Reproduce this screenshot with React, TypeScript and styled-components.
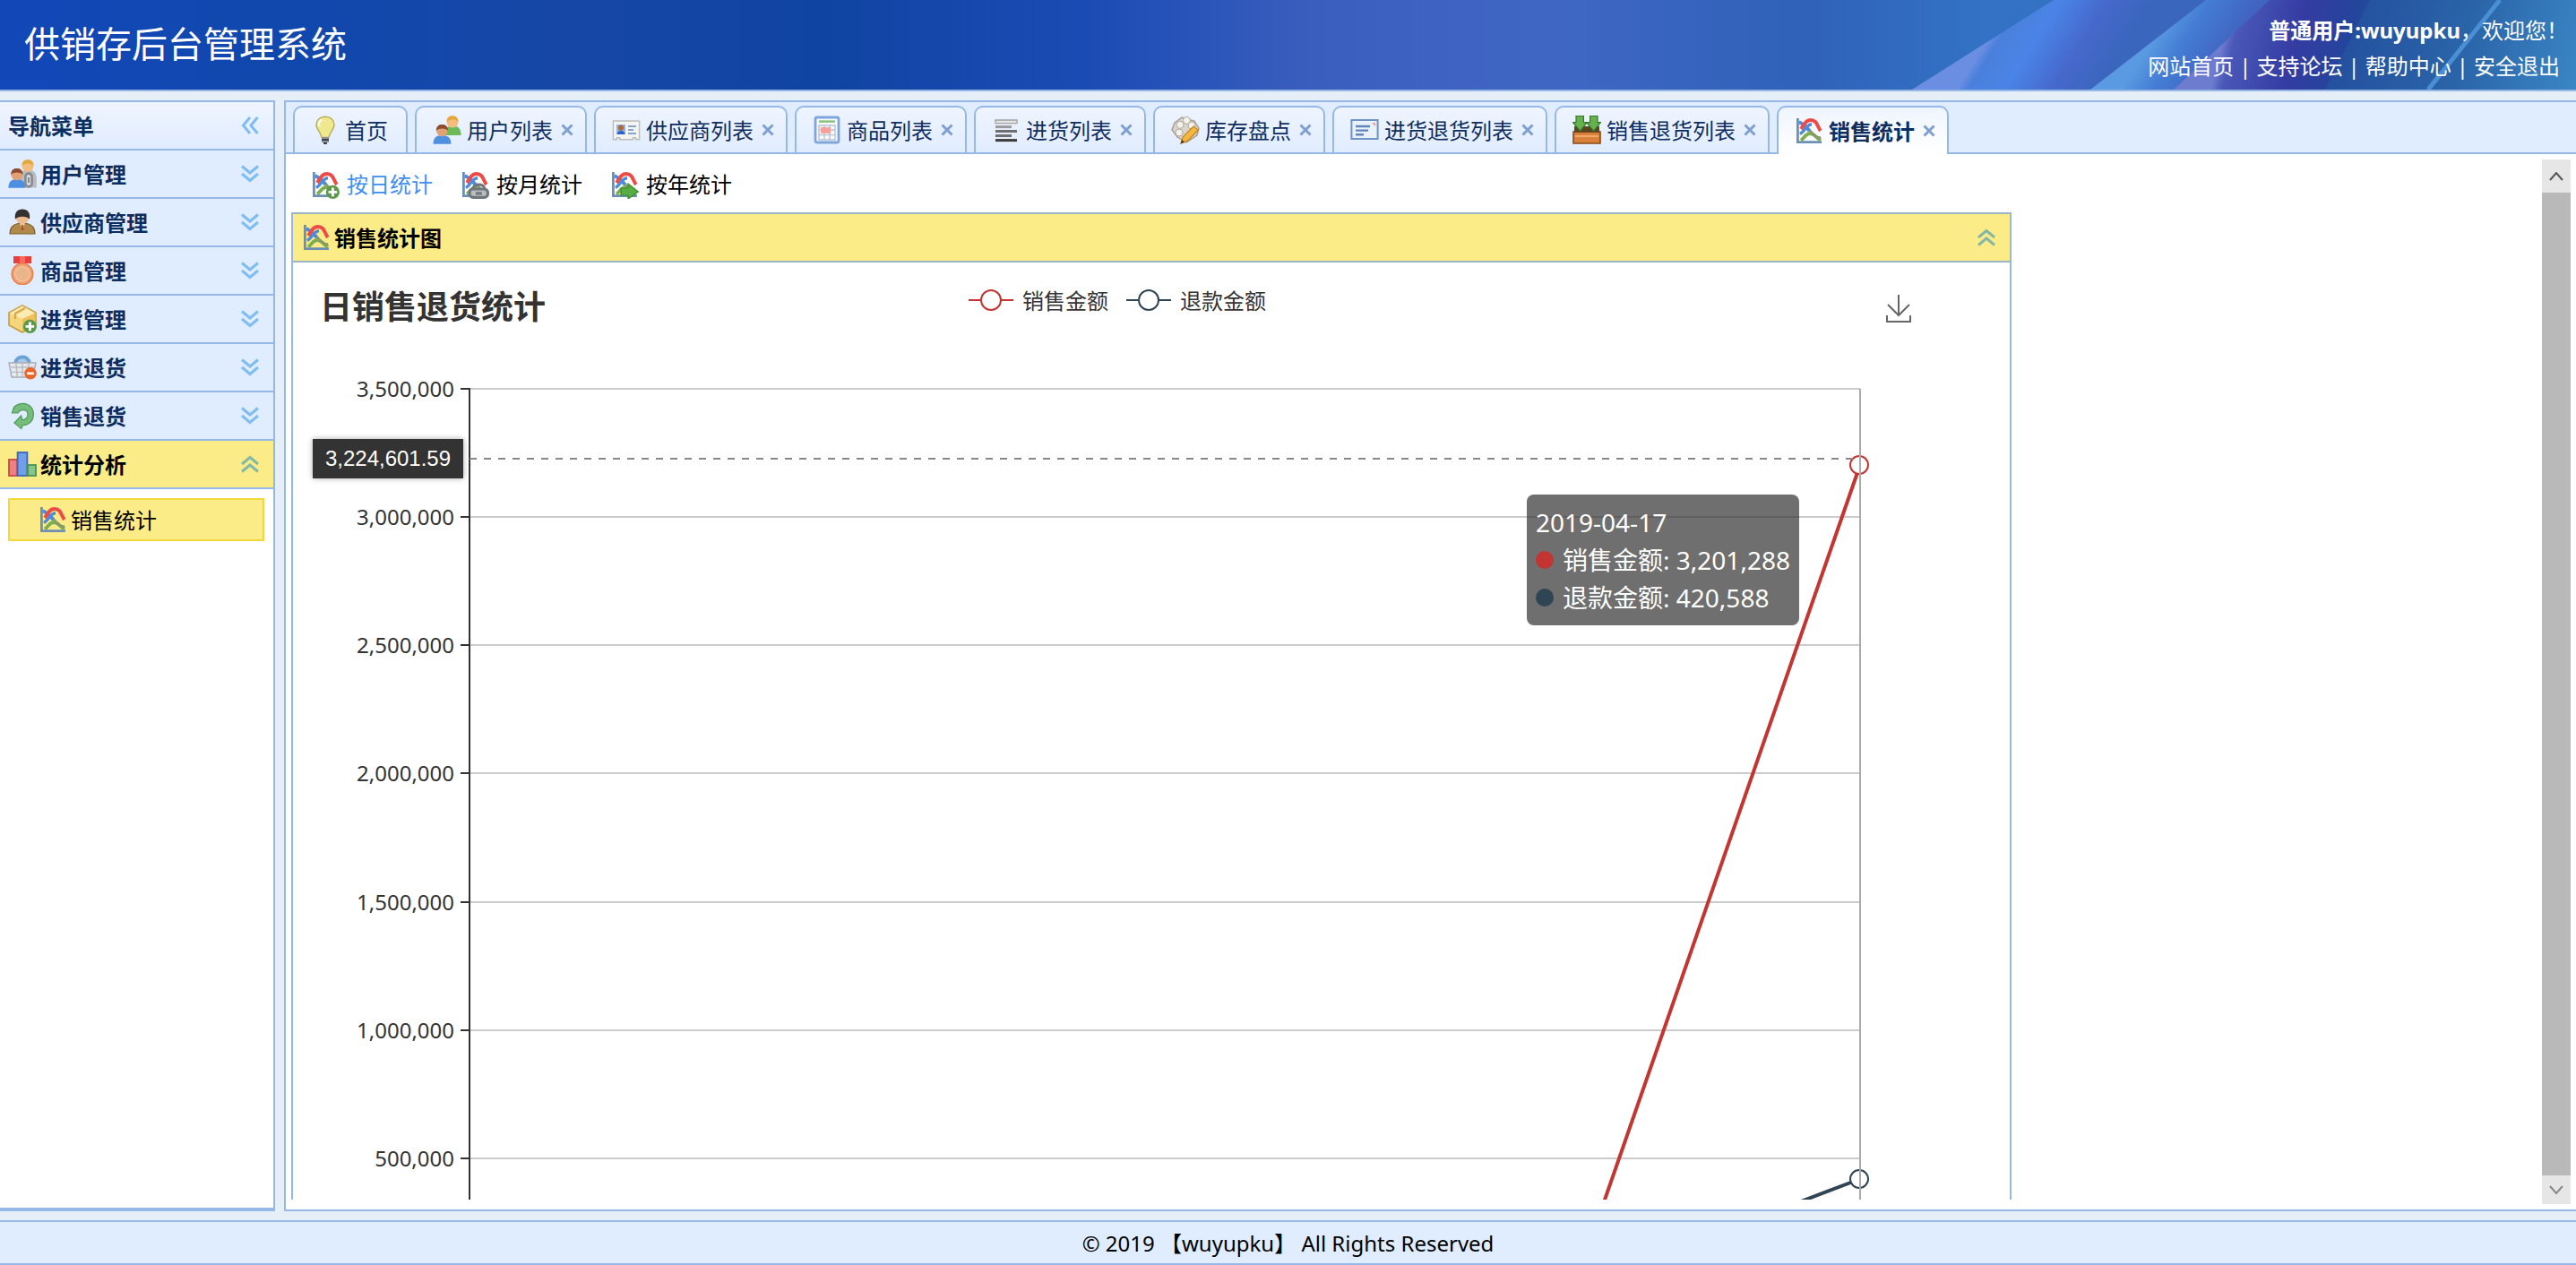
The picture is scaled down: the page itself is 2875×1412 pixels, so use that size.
import React from 'react';
import styled, { createGlobalStyle, css } from 'styled-components';

const line = '#95b8e7';
const sans = '"Noto Sans", "Noto Sans CJK SC", sans-serif';

const GlobalStyle = createGlobalStyle`
  * { box-sizing: border-box; }
  body { margin: 0; background: #e6eef8; }
  button { margin: 0; padding: 0; border: 0; background: none; font: inherit; color: inherit; cursor: pointer; }
  a { color: inherit; text-decoration: none; }
  svg { display: block; flex: none; }
`;

const Page = styled.div`
  display: flex;
  flex-direction: column;
  gap: 10px;
  height: 100vh;
  font-family: ${sans};
  font-size: 24px;
  line-height: 32px;
  color: #000;
  overflow: hidden;
`;

const Header = styled.header`
  position: relative;
  display: flex;
  justify-content: space-between;
  flex: none;
  height: 102px;
  border-bottom: 2px solid ${line};
  background: linear-gradient(90deg, #1247b8 0%, #1048ae 10%, #1647a6 22%, #1044a2 32%, #1a4bb4 42%, #3a5ebe 51%, #4066c4 60%, #2f62b8 70%, #3372c4 77%, #3a6cc0 100%);
  color: #fff;
`;

const Beams = styled.svg`
  position: absolute;
  right: 0;
  top: 0;
`;

const Brand = styled.h1`
  position: relative;
  margin: 0;
  padding: 19px 0 0 27px;
  font-size: 40px;
  line-height: 60px;
  font-weight: 400;
`;

const UserArea = styled.div`
  position: relative;
  padding: 14px 9px 0 0;
  line-height: 40px;
  text-align: right;
`;

const HeaderLinks = styled.nav`
  display: flex;
  justify-content: flex-end;
  gap: 6px;
  padding-right: 9px;
`;

const Body = styled.div`
  display: flex;
  gap: 10px;
  flex: 1;
  min-height: 0;
`;

const Sidebar = styled.aside`
  flex: none;
  width: 307px;
  border: solid ${line};
  border-width: 2px 2px 4px 0;
  background: #fff;
`;

const bar = css`
  display: flex;
  align-items: center;
  gap: 4px;
  width: 100%;
  height: 54px;
  padding: 0 16px 0 9px;
  border-bottom: 2px solid ${line};
  font-size: 24px;
  line-height: 32px;
  font-weight: 700;
  text-align: left;
`;

const Label = styled.span`
  padding-top: 2px;
`;

const Grow = styled.span`
  flex: 1;
`;

const SideHead = styled.div`
  ${bar}
  background: linear-gradient(#eff5ff, #e0ecff);
  color: #0e2d5f;
`;

const SideRow = styled.button<{ $open?: boolean }>`
  && {
    ${bar}
    background: ${(p) => (p.$open ? '#fbec88' : '#e0ecff')};
    color: ${(p) => (p.$open ? '#000' : '#0e2d5f')};
  }
`;

const SideItem = styled.a`
  display: flex;
  align-items: center;
  gap: 4px;
  height: 48px;
  margin: 10px 10px 0 9px;
  padding-left: 32px;
  border: 2px solid #f2d93a;
  background: #fbec88;
`;

const Main = styled.main`
  display: flex;
  flex-direction: column;
  flex: 1;
  min-width: 0;
  border: solid ${line};
  border-width: 2px 0 2px 2px;
  background: #fff;
`;

const Tabs = styled.div`
  display: flex;
  gap: 8px;
  flex: none;
  height: 58px;
  padding: 4px 8px 0;
  border-bottom: 2px solid ${line};
  background: #e0ecff;
  color: #0e2d5f;
`;

const Tab = styled.div<{ $active?: boolean }>`
  display: flex;
  flex: none;
  height: ${(p) => (p.$active ? 54 : 52)}px;
  border: 2px solid ${line};
  border-bottom: 0;
  border-radius: 10px 10px 0 0;
  background: ${(p) => (p.$active ? 'linear-gradient(#eff5ff, #fff)' : 'linear-gradient(#eff5ff, #e0ecff)')};
  font-weight: ${(p) => (p.$active ? 700 : 400)};
`;

const TabTitle = styled.button<{ $last?: boolean }>`
  && {
    display: flex;
    align-items: center;
    gap: 6px;
    padding: 0 ${(p) => (p.$last ? 20 : 0)}px 0 18px;
  }
`;

const TabClose = styled.button`
  && {
    display: flex;
    align-items: center;
    justify-content: center;
    width: 32px;
    margin-right: 4px;
  }
`;

const Pane = styled.div`
  display: flex;
  flex: 1;
  min-height: 0;
  padding: 6px;
`;

const Content = styled.div`
  flex: 1;
  min-width: 0;
  margin: -6px 0 5px;
  overflow: hidden;
`;

const Tools = styled.div`
  display: flex;
  gap: 31px;
  padding: 18px 22px 15px;
`;

const Tool = styled.button<{ $on?: boolean }>`
  && {
    display: flex;
    align-items: center;
    gap: 8px;
    color: ${(p) => (p.$on ? '#3f8ff0' : '#000')};
  }
`;

const Panel = styled.section`
  width: 1920px;
  border: 2px solid ${line};
  border-top-color: #9bb5c4;
`;

const PanelHead = styled.h2`
  ${bar}
  margin: 0;
  padding-left: 10px;
  border-bottom-color: #9bb5c4;
  background: #fbec88;
`;

const Chart = styled.div`
  position: relative;
  width: 1840px;
  color: #333;
`;

const ChartHead = styled.div`
  display: grid;
  grid-template-columns: 1fr auto 1fr;
  align-items: start;
  height: 100px;
  padding: 25px 30px 0;
`;

const ChartTitle = styled.h3`
  margin: 0;
  font-size: 36px;
  line-height: 50px;
  font-weight: 700;
`;

const Legend = styled.div`
  display: flex;
  gap: 20px;
`;

const LegendItem = styled.button`
  && {
    display: flex;
    align-items: center;
    gap: 10px;
    height: 34px;
  }
`;

const Save = styled.button`
  && {
    justify-self: end;
    padding-top: 8px;
  }
`;

const Plot = styled.svg`
  font-family: ${sans};
  font-size: 24px;
  overflow: visible;
`;

const Tip = styled.div`
  position: absolute;
  left: 1377px;
  top: 259px;
  padding: 10px;
  border-radius: 8px;
  background: rgba(50, 50, 50, 0.7);
  color: #fff;
  font-size: 28px;
  line-height: 42px;
  white-space: nowrap;
`;

const TipRow = styled.div`
  display: flex;
  align-items: center;
  gap: 10px;
`;

const Dot = styled.span<{ $color: string }>`
  width: 20px;
  height: 20px;
  border-radius: 50%;
  background: ${(p) => p.$color};
`;

const Scrollbar = styled.div`
  display: flex;
  flex-direction: column;
  flex: none;
  width: 32px;
  background: #b9b9b9;
`;

const ScrollButton = styled.button<{ $size: number }>`
  && {
    display: flex;
    align-items: center;
    justify-content: center;
    height: ${(p) => p.$size}px;
    background: #e6e6e6;
  }
`;

const Footer = styled.footer`
  display: flex;
  align-items: center;
  justify-content: center;
  flex: none;
  height: 50px;
  border: solid ${line};
  border-width: 2px 0;
  background: #e0ecff;
`;

type Badge = 'plus' | 'link' | 'arrow';

const badges: Record<Badge, React.ReactNode> = {
  plus: (
    <g>
      <circle cx="12.2" cy="12.2" r="3.8" fill="#5a9a48" />
      <path d="M12.2 9.800v4.800M9.800 12.200h4.800" stroke="#fff" strokeWidth="1.400" />
    </g>
  ),
  link: (
    <g fill="none" stroke="#6f767c" strokeWidth="1.600">
      <rect x="5" y="10.500" width="10.200" height="4.700" rx="2" fill="#b8bdc2" />
      <path d="M7 10.500c0-3.200 6.400-3.200 6.400 0M8.500 12.900h3.400" />
    </g>
  ),
  arrow: <path d="M6 10h4V7.500l5.700 4.500L10 16v-2H6z" fill="#58ad42" stroke="#3a8a2c" strokeWidth=".6" />,
};

const art: Record<string, React.ReactNode> = {
  chart: (
    <g fill="none">
      <path d="M1.700 1v13.300H15" stroke="#6c8fb5" strokeWidth="1.400" />
      <path d="M3.500 13.300C5.500 12 6 9.500 8.500 9.500s3.500 2.500 6 3.800" stroke="#7fae52" strokeWidth="1.900" />
      <path d="M2.600 3.500C5 4 7.500 6.500 9 8.400s3 3.600 5.600 3.400" stroke="#8a9a68" strokeWidth="1.400" />
      <path d="M2.400 3.200c2 .6 4.300 3 5.800 4.800" stroke="#4d8bdc" strokeWidth="1.900" />
      <path d="M3 9.800C6.500 7.500 6 4.800 9.500 4.300" stroke="#4d8bdc" strokeWidth="1.700" />
      <path d="M3.500 7C5.200 5 5.800 2 9 2c3.400 0 3.600 3.400 5.400 6" stroke="#ee4b48" strokeWidth="2" />
    </g>
  ),
  bulb: (
    <g>
      <path d="M8 .6c-3 0-5 2-5 4.600 0 2.300 2.600 4.200 3 7h4c.4-2.800 3-4.700 3-7C13 2.600 11 .6 8 .6z" fill="#efe88e" stroke="#b9ad5c" strokeWidth=".7" />
      <path d="M6 2.300C4.800 3 4.300 4.500 4.800 6" stroke="#fff" fill="none" />
      <path d="M6 12h4v3H6z" fill="#8c9199" />
      <path d="M6 13.500h4M7 15.500h2" stroke="#3f444b" strokeWidth=".9" />
    </g>
  ),
  users: (
    <g>
      <path d="M6.500 11c0-4 1.800-5.200 4.600-5.200S15.800 7 15.800 11z" fill="#6cb95a" />
      <circle cx="11" cy="3.600" r="3.200" fill="#f3bd7c" />
      <path d="M7.700 3.500C7.700 1 9.300.1 11 .1s3.300.9 3.300 3.400c-1.600-1.700-5-1.700-6.600 0z" fill="#e6a73a" />
      <path d="M.3 15.900C.3 12.300 2 11 5.200 11s5 1.300 5 4.900z" fill="#4f8fe0" />
      <circle cx="5.200" cy="8.400" r="3.200" fill="#e3a072" />
      <path d="M1.900 8.500C1.900 5.900 3.500 5 5.200 5s3.400.9 3.400 3.500C6.800 6.900 3.700 6.900 1.900 8.500z" fill="#8c4a2f" />
    </g>
  ),
  usersCog: (
    <g>
      <path d="M6.500 11c0-4 1.800-5.200 4.600-5.200S15.900 7 15.900 11v4.800H9z" fill="#b9bcc0" />
      <circle cx="11" cy="3.600" r="3.200" fill="#f3bd7c" />
      <path d="M7.700 3.500C7.700 1 9.300.1 11 .1s3.300.9 3.300 3.400c-1.600-1.700-5-1.700-6.600 0z" fill="#e6a73a" />
      <path d="M.2 15.900C.2 12.300 2 11 4.900 11s4.800 1.300 4.800 4.900z" fill="#4f8fe0" />
      <circle cx="4.900" cy="8.400" r="3.200" fill="#e3a072" />
      <path d="M1.600 8.500C1.600 5.900 3.200 5 4.900 5s3.400.9 3.400 3.500C6.500 6.900 3.400 6.900 1.600 8.500z" fill="#8c4a2f" />
      <rect x="9.700" y="7.800" width="3.600" height="7.400" rx="1.800" fill="#d9dbdd" stroke="#858a90" strokeWidth="1.300" />
      <path d="M11.500 10v3" stroke="#858a90" />
    </g>
  ),
  card: (
    <g>
      <path d="M.7 3h14.600v10.400h-2v-1h-1.600v1H4.300v-1H2.700v1h-2z" fill="#f4f4f2" stroke="#bdbdb8" strokeWidth=".7" />
      <rect x="2.500" y="5" width="5" height="5.500" fill="#8db6ea" />
      <circle cx="5" cy="6.800" r="1.600" fill="#b06a3c" />
      <path d="M2.800 10.500c0-2.700 4.400-2.700 4.400 0z" fill="#2d62c8" />
      <path d="M9 6h4.500M9 8h3M9 10h4.500" stroke="#85a6cf" strokeWidth="1" />
    </g>
  ),
  sheet: (
    <g>
      <rect x="1.500" y="1" width="13" height="14" rx="1" fill="#f7f9fd" stroke="#7fa6dc" strokeWidth="1.400" />
      <path d="M3.500 3.300h9" stroke="#86c07a" strokeWidth="1.200" />
      <path d="M3.500 5.500h9v8h-9zM3.500 8h9M3.500 10.800h9M6.500 5.500v8M9.500 5.500v8" fill="none" stroke="#b9c3d6" strokeWidth=".7" />
      <path d="M4.500 6.500h5.500V10H4.500z" fill="#f59a94" opacity=".9" />
    </g>
  ),
  lines: (
    <g>
      <path d="M2 2.500h12v1.800H2z" fill="#e4e4e4" stroke="#a3a3a3" strokeWidth=".7" />
      <path d="M2 6.300h9" stroke="#9a9a9a" strokeWidth="1.500" />
      <path d="M2 8.800h12M2 11.200h9" stroke="#6f6f6f" strokeWidth="1.500" />
      <path d="M2 13.800h12" stroke="#3b3b3b" strokeWidth="1.500" />
    </g>
  ),
  brick: (
    <g>
      <path d="M2 4l4-3 3 1 4 1 2.500 4-1 4-6 4-5-3L.5 8z" fill="#d9d5cc" stroke="#a39d90" strokeWidth=".7" />
      <circle cx="5" cy="5.200" r="2" fill="#f4f2ec" stroke="#b0aa9e" strokeWidth=".5" />
      <circle cx="8.700" cy="2.700" r="2" fill="#f4f2ec" stroke="#b0aa9e" strokeWidth=".5" />
      <circle cx="11.500" cy="5.500" r="2" fill="#f4f2ec" stroke="#b0aa9e" strokeWidth=".5" />
      <circle cx="4.500" cy="9.500" r="2" fill="#f4f2ec" stroke="#b0aa9e" strokeWidth=".5" />
      <path d="M5.500 15.500l1-3.500 6-6 2.700 2-6 6.200z" fill="#f3b73f" stroke="#c78421" strokeWidth=".6" />
      <path d="M5.300 15.700l.7-2.200 1.600 1.200z" fill="#4c3b2a" />
    </g>
  ),
  form: (
    <g>
      <rect x=".7" y="2.500" width="14.600" height="10.500" fill="#e9f1fc" stroke="#6e93c4" strokeWidth="1" />
      <path d="M3 6h8M3 8.300h7M3 10.600h4.500" stroke="#5f86bd" strokeWidth="1.200" />
      <path d="M12 4h2v2z" fill="#f09b9b" />
    </g>
  ),
  crate: (
    <g>
      <path d="M.5 9h15v6.500H.5z" fill="#d9803a" stroke="#8a4718" strokeWidth=".8" />
      <path d="M1.500 11.500h13" stroke="#f0ab6b" />
      <path d="M1 6h14v3.400H1z" fill="#5b4420" />
      <path d="M2 .2h4.200v3.600h1.900L4.300 8.600.2 3.800H2zM9.800.2H14v3.600h1.800l-4 4.800-4-4.800h2z" fill="#66b24e" stroke="#35782a" strokeWidth=".6" />
    </g>
  ),
  person: (
    <g>
      <path d="M1 14.500C1 10.500 3.500 8.500 8 8.500s7 2 7 6z" fill="#b08a4a" stroke="#7c5d2a" strokeWidth=".6" />
      <path d="M6.500 8.500h3L8 13z" fill="#e8c99a" />
      <path d="M7.500 9.500h1l.4 2.500-.9 1-.9-1z" fill="#b5552c" />
      <circle cx="8" cy="5.500" r="3.500" fill="#edb98e" />
      <path d="M4 6.400C3.400 2.500 5.300.8 8 .8s4.600 1.700 4 5.600C10.700 4.400 5.300 4.400 4 6.400z" fill="#33302e" />
    </g>
  ),
  medal: (
    <g>
      <path d="M3 0h10v4H3z" fill="#e9403c" />
      <path d="M6.500 0h3v4h-3z" fill="#fb6a60" />
      <circle cx="8" cy="9.900" r="5.900" fill="#f2a172" stroke="#e8834f" strokeWidth=".8" />
      <circle cx="8" cy="9.900" r="4.100" fill="#e9b58b" stroke="#f6c4a0" strokeWidth=".7" />
    </g>
  ),
  box: (
    <g>
      <path d="M8 .5l7.500 4v7L8 15.500.5 11.500v-7z" fill="#f5d67c" stroke="#c99b3a" strokeWidth=".8" />
      <path d="M.8 4.700L8 8l7.200-3.300L8 .8z" fill="#fcecb4" />
      <path d="M8 8v7.200L15.200 11.400V4.700z" fill="#eec05a" />
      <path d="M9.500 2L4 5v3" fill="none" stroke="#d9a84a" strokeWidth="1.200" />
    </g>
  ),
  basket: (
    <g>
      <path d="M4 6C4.500 1 11.500 1 12 6" fill="#a9c9e6" stroke="#6ba3d6" strokeWidth="2" />
      <path d="M.5 5.500h15L14 13.500H2z" fill="#e6e8eb" stroke="#a7adb5" strokeWidth=".7" />
      <path d="M1.500 8h13M2 10.700h12M4.500 5.800l.6 7.500M8 5.800v7.500M11.500 5.800l-.6 7.500" stroke="#b6bcc4" strokeWidth=".7" />
      <circle cx="12.500" cy="11.400" r="3.400" fill="#e8682a" />
      <path d="M10.600 11.400h3.800" stroke="#fff" strokeWidth="1.300" />
    </g>
  ),
  back: (
    <path d="M2.200 6.500C2.800 3 5.200 1.200 8.200 1.200c3.500 0 6 2.500 6 6 0 3.500-2.300 6-6 6.100l-.8 2L3.500 12l3.800-4 .5 2.300c2 .1 3.200-1.200 3.200-3 0-1.500-1-2.500-2.700-2.500-1.500 0-2.300.7-2.700 1.700z" fill="#76bd7c" stroke="#4f9a59" strokeWidth=".6" />
  ),
  bars: (
    <g strokeWidth=".9">
      <rect x=".5" y="5.500" width="4.600" height="9" fill="#f08080" stroke="#c8474b" />
      <rect x="5.300" y="1.500" width="5.400" height="13" fill="#6f9fe8" stroke="#3c66b8" />
      <rect x="11" y="8.500" width="4.500" height="6" fill="#86c48a" stroke="#4c9152" />
    </g>
  ),
};

const Icon = ({ name, badge }: { name: string; badge?: Badge }) => (
  <svg width="32" height="32" viewBox="0 0 16 16" aria-hidden="true">
    {art[name]}
    {badge && badges[badge]}
  </svg>
);

const Chevrons = ({ turn = 0 }: { turn?: number }) => (
  <svg width="20" height="20" viewBox="0 0 20 20" fill="none" stroke={turn === 180 ? '#84b8a6' : '#7fbdf0'} strokeWidth="3" aria-hidden="true">
    <path transform={`rotate(${turn} 10 10)`} d="M1 1.500l9 7.500 9-7.500M1 10l9 7.500L19 10" />
  </svg>
);

const Mark = ({ color }: { color: string }) => (
  <svg width="50" height="28" viewBox="0 0 50 28" fill="#fff" stroke={color} aria-hidden="true">
    <path d="M0 14h50" strokeWidth="2" />
    <circle cx="25" cy="14" r="11" strokeWidth="2" />
  </svg>
);

const sections = [
  { label: '用户管理', icon: 'usersCog' },
  { label: '供应商管理', icon: 'person' },
  { label: '商品管理', icon: 'medal' },
  { label: '进货管理', icon: 'box', badge: 'plus' as Badge },
  { label: '进货退货', icon: 'basket' },
  { label: '销售退货', icon: 'back' },
  { label: '统计分析', icon: 'bars', open: true },
];

const tabs = [
  { label: '首页', icon: 'bulb', fixed: true },
  { label: '用户列表', icon: 'users' },
  { label: '供应商列表', icon: 'card' },
  { label: '商品列表', icon: 'sheet' },
  { label: '进货列表', icon: 'lines' },
  { label: '库存盘点', icon: 'brick' },
  { label: '进货退货列表', icon: 'form' },
  { label: '销售退货列表', icon: 'crate' },
  { label: '销售统计', icon: 'chart', active: true },
];

const tools: { label: string; badge: Badge }[] = [
  { label: '按日统计', badge: 'plus' },
  { label: '按月统计', badge: 'link' },
  { label: '按年统计', badge: 'arrow' },
];

const links = ['网站首页', '支持论坛', '帮助中心', '安全退出'];
const series = [
  { name: '销售金额', color: '#c23531', value: 3201288 },
  { name: '退款金额', color: '#2f4554', value: 420588 },
];
const ticks = [3500000, 3000000, 2500000, 2000000, 1500000, 1000000, 500000];

const plotTop = 41;
const plotBottom = 1044;
const axisX = 197;
const lastX = 1749;
const prevX = 1430;
const yOf = (v: number) => Math.floor(plotBottom - (v / 3500000) * (plotBottom - plotTop));

const HeaderBeams = () => (
  <Beams width="800" height="100" viewBox="0 0 800 100" aria-hidden="true">
    <defs>
      <linearGradient id="b1" gradientUnits="userSpaceOnUse" x1="140" y1="50" x2="250" y2="119">
        <stop offset="0" stopColor="#6a8ee2" />
        <stop offset=".08" stopColor="#4a80dc" />
        <stop offset=".35" stopColor="#4a84e6" />
        <stop offset=".7" stopColor="#4668cc" />
        <stop offset="1" stopColor="#3b66be" />
      </linearGradient>
      <linearGradient id="b2" gradientUnits="userSpaceOnUse" x1="323" y1="50" x2="390" y2="92">
        <stop offset="0" stopColor="#5a9ae2" />
        <stop offset=".4" stopColor="#447cd4" />
        <stop offset="1" stopColor="#4064c0" />
      </linearGradient>
      <linearGradient id="b3" gradientUnits="userSpaceOnUse" x1="404" y1="50" x2="560" y2="90">
        <stop offset="0" stopColor="#6e7cd0" />
        <stop offset=".08" stopColor="#4a58b8" />
        <stop offset=".5" stopColor="#343ca2" />
        <stop offset=".85" stopColor="#24459c" />
        <stop offset="1" stopColor="#24509e" />
      </linearGradient>
      <linearGradient id="b4" gradientUnits="userSpaceOnUse" x1="540" y1="30" x2="800" y2="100">
        <stop offset="0" stopColor="#24509e" />
        <stop offset=".5" stopColor="#2a64a8" />
        <stop offset="1" stopColor="#3a86c4" />
      </linearGradient>
    </defs>
    <path d="M59 100L217 0h583v100z" fill="url(#b1)" />
    <path d="M258 100L387 0h413v100z" fill="url(#b2)" />
    <path d="M351 100L458 0h342v100z" fill="url(#b3)" />
    <path d="M520 100L570 0h230v100z" fill="url(#b4)" />
    <path d="M635 100L715 0" stroke="#4a8fd4" strokeWidth="5" />
  </Beams>
);

export default function App() {
  return (
    <>
      <GlobalStyle />
      <Page>
        <Header>
          <HeaderBeams />
          <Brand>供销存后台管理系统</Brand>
          <UserArea>
            <div>
              <strong>普通用户:wuyupku</strong>，欢迎您！
            </div>
            <HeaderLinks>
              {links.map((l, i) => (
                <React.Fragment key={l}>
                  {i > 0 && <span>|</span>}
                  <a href="#">{l}</a>
                </React.Fragment>
              ))}
            </HeaderLinks>
          </UserArea>
        </Header>

        <Body>
          <Sidebar>
            <SideHead>
              <Label>导航菜单</Label>
              <Grow />
              <button aria-label="收起">
                <Chevrons turn={90} />
              </button>
            </SideHead>
            {sections.map((s) => (
              <SideRow key={s.label} $open={s.open}>
                <Icon name={s.icon} badge={s.badge} />
                <Label>{s.label}</Label>
                <Grow />
                <Chevrons turn={s.open ? 180 : 0} />
              </SideRow>
            ))}
            <SideItem href="#">
              <Icon name="chart" />
              <Label>销售统计</Label>
            </SideItem>
          </Sidebar>

          <Main>
            <Tabs>
              {tabs.map((t) => (
                <Tab key={t.label} $active={t.active}>
                  <TabTitle $last={t.fixed}>
                    <Icon name={t.icon} />
                    <Label>{t.label}</Label>
                  </TabTitle>
                  {!t.fixed && (
                    <TabClose aria-label="关闭">
                      <svg width="14" height="14" viewBox="0 0 14 14" stroke="#7f9fd0" strokeWidth="3">
                        <path d="M1.500 1.500l11 11M12.500 1.500l-11 11" />
                      </svg>
                    </TabClose>
                  )}
                </Tab>
              ))}
            </Tabs>
            <Pane>
              <Content>
                <Tools>
                  {tools.map((t, i) => (
                    <Tool key={t.label} $on={i === 0}>
                      <Icon name="chart" badge={t.badge} />
                      <span>{t.label}</span>
                    </Tool>
                  ))}
                </Tools>
                <Panel>
                  <PanelHead>
                    <Icon name="chart" />
                    <Label>销售统计图</Label>
                    <Grow />
                    <button aria-label="折叠">
                      <Chevrons turn={180} />
                    </button>
                  </PanelHead>
                  <Chart>
                    <ChartHead>
                      <ChartTitle>日销售退货统计</ChartTitle>
                      <Legend>
                        {series.map((s) => (
                          <LegendItem key={s.name}>
                            <Mark color={s.color} />
                            <Label>{s.name}</Label>
                          </LegendItem>
                        ))}
                      </Legend>
                      <Save aria-label="保存为图片">
                        <svg width="36" height="36" viewBox="0 0 36 36" fill="none" stroke="#666" strokeWidth="2">
                          <path d="M18 3v23M6 14l12 12 12-12M5 26v7h26v-7" />
                        </svg>
                      </Save>
                    </ChartHead>
                    <Plot width="1840" height="1100" viewBox="0 0 1840 1100">
                      {ticks.map((v) => (
                        <g key={v}>
                          <path d={`M${axisX} ${yOf(v)}H${lastX}`} stroke="#ccc" strokeWidth="2" />
                          <path d={`M${axisX - 10} ${yOf(v)}h10`} stroke="#333" strokeWidth="2" />
                          <text x="180" y={yOf(v) + 9} textAnchor="end" fill="#333">
                            {v.toLocaleString('en-US')}
                          </text>
                        </g>
                      ))}
                      <path d={`M${axisX} ${plotTop - 1}V${plotBottom}`} stroke="#333" strokeWidth="2" />
                      {series.map((s) => (
                        <path key={s.name} d={`M${prevX} ${plotBottom}L${lastX} ${yOf(s.value)}`} stroke={s.color} strokeWidth="4" />
                      ))}
                      {series.map((s) => (
                        <circle key={s.name} cx={lastX - 1} cy={yOf(s.value)} r="10" fill="#fff" stroke={s.color} strokeWidth="2" />
                      ))}
                      <path d={`M${lastX} ${plotTop}V${plotBottom}`} stroke="#aaa" strokeWidth="2" />
                      <path d={`M${axisX} 119H${lastX - 8}`} stroke="#888" strokeWidth="2" strokeDasharray="8 8" />
                      <rect x="22" y="97" width="168" height="44" fill="#333" style={{ filter: 'drop-shadow(0 0 3px #aaa)' }} />
                      <text x="106" y="127" textAnchor="middle" fill="#fff" fontFamily="Liberation Sans, sans-serif">
                        3,224,601.59
                      </text>
                    </Plot>
                    <Tip>
                      <div>2019-04-17</div>
                      {series.map((s) => (
                        <TipRow key={s.name}>
                          <Dot $color={s.color} />
                          <span>
                            {s.name}: {s.value.toLocaleString('en-US')}
                          </span>
                        </TipRow>
                      ))}
                    </Tip>
                  </Chart>
                </Panel>
              </Content>
              <Scrollbar>
                <ScrollButton $size={37} aria-label="向上滚动">
                  <svg width="16" height="10" viewBox="0 0 16 10" fill="none" stroke="#555" strokeWidth="2">
                    <path d="M1 9l7-8 7 8" />
                  </svg>
                </ScrollButton>
                <Grow />
                <ScrollButton $size={32} aria-label="向下滚动">
                  <svg width="16" height="10" viewBox="0 0 16 10" fill="none" stroke="#888" strokeWidth="2">
                    <path d="M1 1l7 8 7-8" />
                  </svg>
                </ScrollButton>
              </Scrollbar>
            </Pane>
          </Main>
        </Body>

        <Footer>
          <Label>© 2019 【wuyupku】 All Rights Reserved</Label>
        </Footer>
      </Page>
    </>
  );
}
